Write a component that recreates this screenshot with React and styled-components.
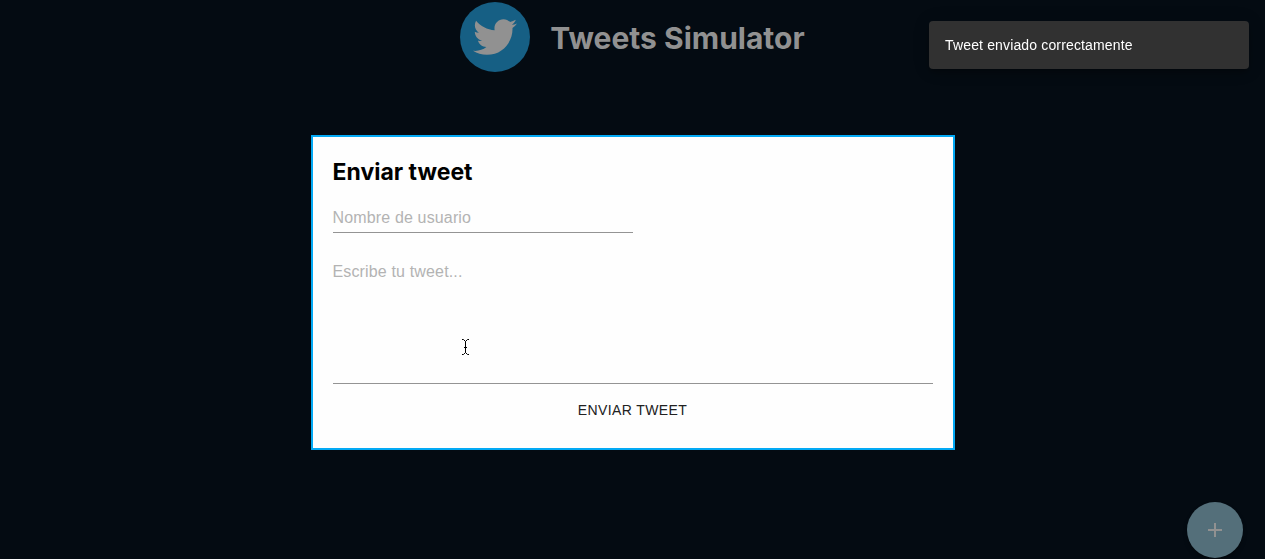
import React from "react";
import styled, { createGlobalStyle } from "styled-components";
import { FaTwitter } from "react-icons/fa";

const GlobalStyle = createGlobalStyle`
  *, *::before, *::after { box-sizing: border-box; }
  body {
    margin: 0;
    background: #040b12;
    font-family: "Liberation Sans", Arial, sans-serif;
  }
`;

const Header = styled.header`
  display: flex;
  align-items: center;
  justify-content: center;
  gap: 20px;
  padding: 2px 16px;
`;

const Logo = styled.div`
  display: grid;
  place-items: center;
  width: 70px;
  height: 70px;
  border-radius: 50%;
  background: #165f84;
  color: #919191;
`;

const Title = styled.h1`
  margin: 0;
  padding-top: 2px;
  color: #919191;
  font: 700 30px/40px Inter, sans-serif;
`;

const Overlay = styled.div`
  position: fixed;
  inset: 0;
  display: flex;
  align-items: center;
  justify-content: center;
  padding: 26px 16px 0;
`;

const Modal = styled.form`
  display: flex;
  flex-direction: column;
  align-items: flex-start;
  width: 100%;
  max-width: 644px;
  padding: 20px;
  border: 2px solid #03a9f4;
  background: #fefefe;
`;

const ModalTitle = styled.h2`
  margin: 0 0 14px;
  color: #000;
  font: 700 23px/30px Inter, sans-serif;
`;

const fieldStyles = `
  display: block;
  margin: 0;
  padding: 6px 0 7px;
  border: 0;
  border-bottom: 1px solid #949494;
  border-radius: 0;
  outline: 0;
  background: transparent;
  color: #212121;
  font: 400 16px/19px "Liberation Sans", Arial, sans-serif;
  letter-spacing: 0.00938em;
  &::placeholder { color: #b3b3b3; opacity: 1; }
`;

const NameInput = styled.input`
  ${fieldStyles}
  width: 300px;
  max-width: 100%;
  height: 32px;
  padding: 7px 0 5px;
`;

const TweetInput = styled.textarea`
  ${fieldStyles}
  width: 100%;
  height: 128px;
  margin-top: 23px;
  resize: none;
`;

const SendButton = styled.button`
  align-self: stretch;
  margin-top: 8px;
  padding: 6px 8px;
  border: 0;
  border-radius: 4px;
  background: transparent;
  color: #212121;
  font: 400 14px/24px "Liberation Sans", Arial, sans-serif;
  letter-spacing: 0.02857em;
  text-transform: uppercase;
  cursor: pointer;
`;

const Snackbar = styled.div`
  position: fixed;
  top: 21px;
  right: 16px;
  width: 320px;
  padding: 14px 16px;
  border-radius: 4px;
  background: #313131;
  color: #fff;
  font-size: 14px;
  line-height: 20px;
  letter-spacing: 0.01071em;
  box-shadow: 0 3px 5px -1px rgba(0, 0, 0, 0.2), 0 6px 10px rgba(0, 0, 0, 0.14),
    0 1px 18px rgba(0, 0, 0, 0.12);
`;

const AddButton = styled.button`
  position: fixed;
  right: 22px;
  bottom: 1px;
  display: grid;
  place-items: center;
  width: 56px;
  height: 56px;
  padding: 0;
  border: 0;
  border-radius: 50%;
  background: #546f7a;
  color: #919191;
  box-shadow: 0 3px 5px -1px rgba(0, 0, 0, 0.4);
  cursor: pointer;
`;

const Pointer = styled.svg`
  position: fixed;
  left: 461px;
  top: 338px;
  pointer-events: none;
`;

export default function App() {
  return (
    <>
      <GlobalStyle />
      <Header>
        <Logo>
          <FaTwitter size={44} aria-hidden="true" />
        </Logo>
        <Title>Tweets Simulator</Title>
      </Header>
      <AddButton type="button" aria-label="Nuevo tweet">
        <svg width="24" height="24" viewBox="0 0 24 24" fill="currentColor" aria-hidden="true">
          <path d="M19 13h-6v6h-2v-6H5v-2h6V5h2v6h6v2z" />
        </svg>
      </AddButton>
      <Overlay>
        <Modal role="dialog" aria-labelledby="modal-title" onSubmit={(e) => e.preventDefault()}>
          <ModalTitle id="modal-title">Enviar tweet</ModalTitle>
          <NameInput type="text" name="name" aria-label="Nombre de usuario" placeholder="Nombre de usuario" />
          <TweetInput name="tweet" aria-label="Escribe tu tweet" placeholder="Escribe tu tweet..." />
          <SendButton type="submit">Enviar tweet</SendButton>
        </Modal>
      </Overlay>
      <Snackbar role="status">Tweet enviado correctamente</Snackbar>
      <Pointer width="9" height="18" viewBox="0 0 9 18" fill="none" stroke="#000" aria-hidden="true">
        <path d="M1 1.500h1.500l2 2v11l-2 2H1M8 1.500H6.500l-2 2v11l2 2H8M3 9.500h3" />
      </Pointer>
    </>
  );
}
